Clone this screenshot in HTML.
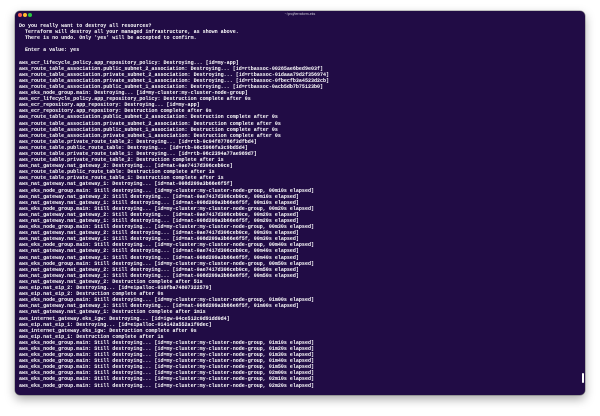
<!DOCTYPE html>
<html><head><meta charset="utf-8"><style>
html,body{margin:0;padding:0;background:#fff;width:600px;height:416px;overflow:hidden}
.win{position:absolute;left:15px;top:11px;width:570px;height:384px;background:#210c45;border-radius:5px;box-shadow:0 4px 10px rgba(0,0,0,.35),0 0 0 .5px rgba(0,0,0,.4);overflow:hidden}
.dot{position:absolute;top:2px;width:4px;height:4px;border-radius:50%}
.title{position:absolute;top:1px;left:0;width:570px;text-align:center;font:3.5px "Liberation Sans",sans-serif;color:#c8c4d4}
pre{position:absolute;left:4px;top:12px;margin:0;font-family:"Liberation Mono",monospace;font-weight:bold;font-size:5.03px;line-height:6.1px;color:#fff;white-space:pre}
.sb{position:absolute;right:1px;top:362px;width:2px;height:10px;background:#fff;border-radius:1px}
</style></head><body>
<div class="win">
<div class="dot" style="left:3px;background:#fe5f57"></div>
<div class="dot" style="left:8px;background:#febc2e"></div>
<div class="dot" style="left:13px;background:#28c840"></div>
<div class="title">~/proj/terraform-eks</div>
<pre>Do you really want to destroy all resources?
  Terraform will destroy all your managed infrastructure, as shown above.
  There is no undo. Only 'yes' will be accepted to confirm.

  Enter a value: yes

aws_ecr_lifecycle_policy.app_repository_policy: Destroying... [id=my-app]
aws_route_table_association.public_subnet_2_association: Destroying... [id=rtbassoc-00285ae6bed9e03f]
aws_route_table_association.private_subnet_2_association: Destroying... [id=rtbassoc-01daaa79d2f356974]
aws_route_table_association.private_subnet_1_association: Destroying... [id=rtbassoc-0fbecfb3a4523d2cb]
aws_route_table_association.public_subnet_1_association: Destroying... [id=rtbassoc-0acb5db7b75123b0]
aws_eks_node_group.main: Destroying... [id=my-cluster:my-cluster-node-group]
aws_ecr_lifecycle_policy.app_repository_policy: Destruction complete after 0s
aws_ecr_repository.app_repository: Destroying... [id=my-app]
aws_ecr_repository.app_repository: Destruction complete after 0s
aws_route_table_association.public_subnet_2_association: Destruction complete after 0s
aws_route_table_association.private_subnet_2_association: Destruction complete after 0s
aws_route_table_association.public_subnet_1_association: Destruction complete after 0s
aws_route_table_association.private_subnet_1_association: Destruction complete after 0s
aws_route_table.private_route_table_2: Destroying... [id=rtb-0c04f87786f3dfbd4]
aws_route_table.public_route_table: Destroying... [id=rtb-08c5966fa3c9bd5d4]
aws_route_table.private_route_table_1: Destroying... [id=rtb-06c2394a77ae989d7]
aws_route_table.private_route_table_2: Destruction complete after 1s
aws_nat_gateway.nat_gateway_2: Destroying... [id=nat-0ae7417d306ceb0ce]
aws_route_table.public_route_table: Destruction complete after 1s
aws_route_table.private_route_table_1: Destruction complete after 1s
aws_nat_gateway.nat_gateway_1: Destroying... [id=nat-008d209a3b66e6f5f]
aws_eks_node_group.main: Still destroying... [id=my-cluster:my-cluster-node-group, 00m10s elapsed]
aws_nat_gateway.nat_gateway_2: Still destroying... [id=nat-0ae7417d306ceb0ce, 00m10s elapsed]
aws_nat_gateway.nat_gateway_1: Still destroying... [id=nat-008d209a3b66e6f5f, 00m10s elapsed]
aws_eks_node_group.main: Still destroying... [id=my-cluster:my-cluster-node-group, 00m20s elapsed]
aws_nat_gateway.nat_gateway_2: Still destroying... [id=nat-0ae7417d306ceb0ce, 00m20s elapsed]
aws_nat_gateway.nat_gateway_1: Still destroying... [id=nat-008d209a3b66e6f5f, 00m20s elapsed]
aws_eks_node_group.main: Still destroying... [id=my-cluster:my-cluster-node-group, 00m30s elapsed]
aws_nat_gateway.nat_gateway_2: Still destroying... [id=nat-0ae7417d306ceb0ce, 00m30s elapsed]
aws_nat_gateway.nat_gateway_1: Still destroying... [id=nat-008d209a3b66e6f5f, 00m30s elapsed]
aws_eks_node_group.main: Still destroying... [id=my-cluster:my-cluster-node-group, 00m40s elapsed]
aws_nat_gateway.nat_gateway_2: Still destroying... [id=nat-0ae7417d306ceb0ce, 00m40s elapsed]
aws_nat_gateway.nat_gateway_1: Still destroying... [id=nat-008d209a3b66e6f5f, 00m40s elapsed]
aws_eks_node_group.main: Still destroying... [id=my-cluster:my-cluster-node-group, 00m50s elapsed]
aws_nat_gateway.nat_gateway_2: Still destroying... [id=nat-0ae7417d306ceb0ce, 00m50s elapsed]
aws_nat_gateway.nat_gateway_1: Still destroying... [id=nat-008d209a3b66e6f5f, 00m50s elapsed]
aws_nat_gateway.nat_gateway_2: Destruction complete after 51s
aws_eip.nat_eip_2: Destroying... [id=eipalloc-010fba74807322579]
aws_eip.nat_eip_2: Destruction complete after 0s
aws_eks_node_group.main: Still destroying... [id=my-cluster:my-cluster-node-group, 01m00s elapsed]
aws_nat_gateway.nat_gateway_1: Still destroying... [id=nat-008d209a3b66e6f5f, 01m00s elapsed]
aws_nat_gateway.nat_gateway_1: Destruction complete after 1m1s
aws_internet_gateway.eks_igw: Destroying... [id=igw-04ce512c0d91dd0d4]
aws_eip.nat_eip_1: Destroying... [id=eipalloc-014142a552a1f0dec]
aws_internet_gateway.eks_igw: Destruction complete after 0s
aws_eip.nat_eip_1: Destruction complete after 1s
aws_eks_node_group.main: Still destroying... [id=my-cluster:my-cluster-node-group, 01m10s elapsed]
aws_eks_node_group.main: Still destroying... [id=my-cluster:my-cluster-node-group, 01m20s elapsed]
aws_eks_node_group.main: Still destroying... [id=my-cluster:my-cluster-node-group, 01m30s elapsed]
aws_eks_node_group.main: Still destroying... [id=my-cluster:my-cluster-node-group, 01m40s elapsed]
aws_eks_node_group.main: Still destroying... [id=my-cluster:my-cluster-node-group, 01m50s elapsed]
aws_eks_node_group.main: Still destroying... [id=my-cluster:my-cluster-node-group, 02m00s elapsed]
aws_eks_node_group.main: Still destroying... [id=my-cluster:my-cluster-node-group, 02m10s elapsed]
aws_eks_node_group.main: Still destroying... [id=my-cluster:my-cluster-node-group, 02m20s elapsed]</pre>
<div class="sb"></div>
</div>
</body></html>
